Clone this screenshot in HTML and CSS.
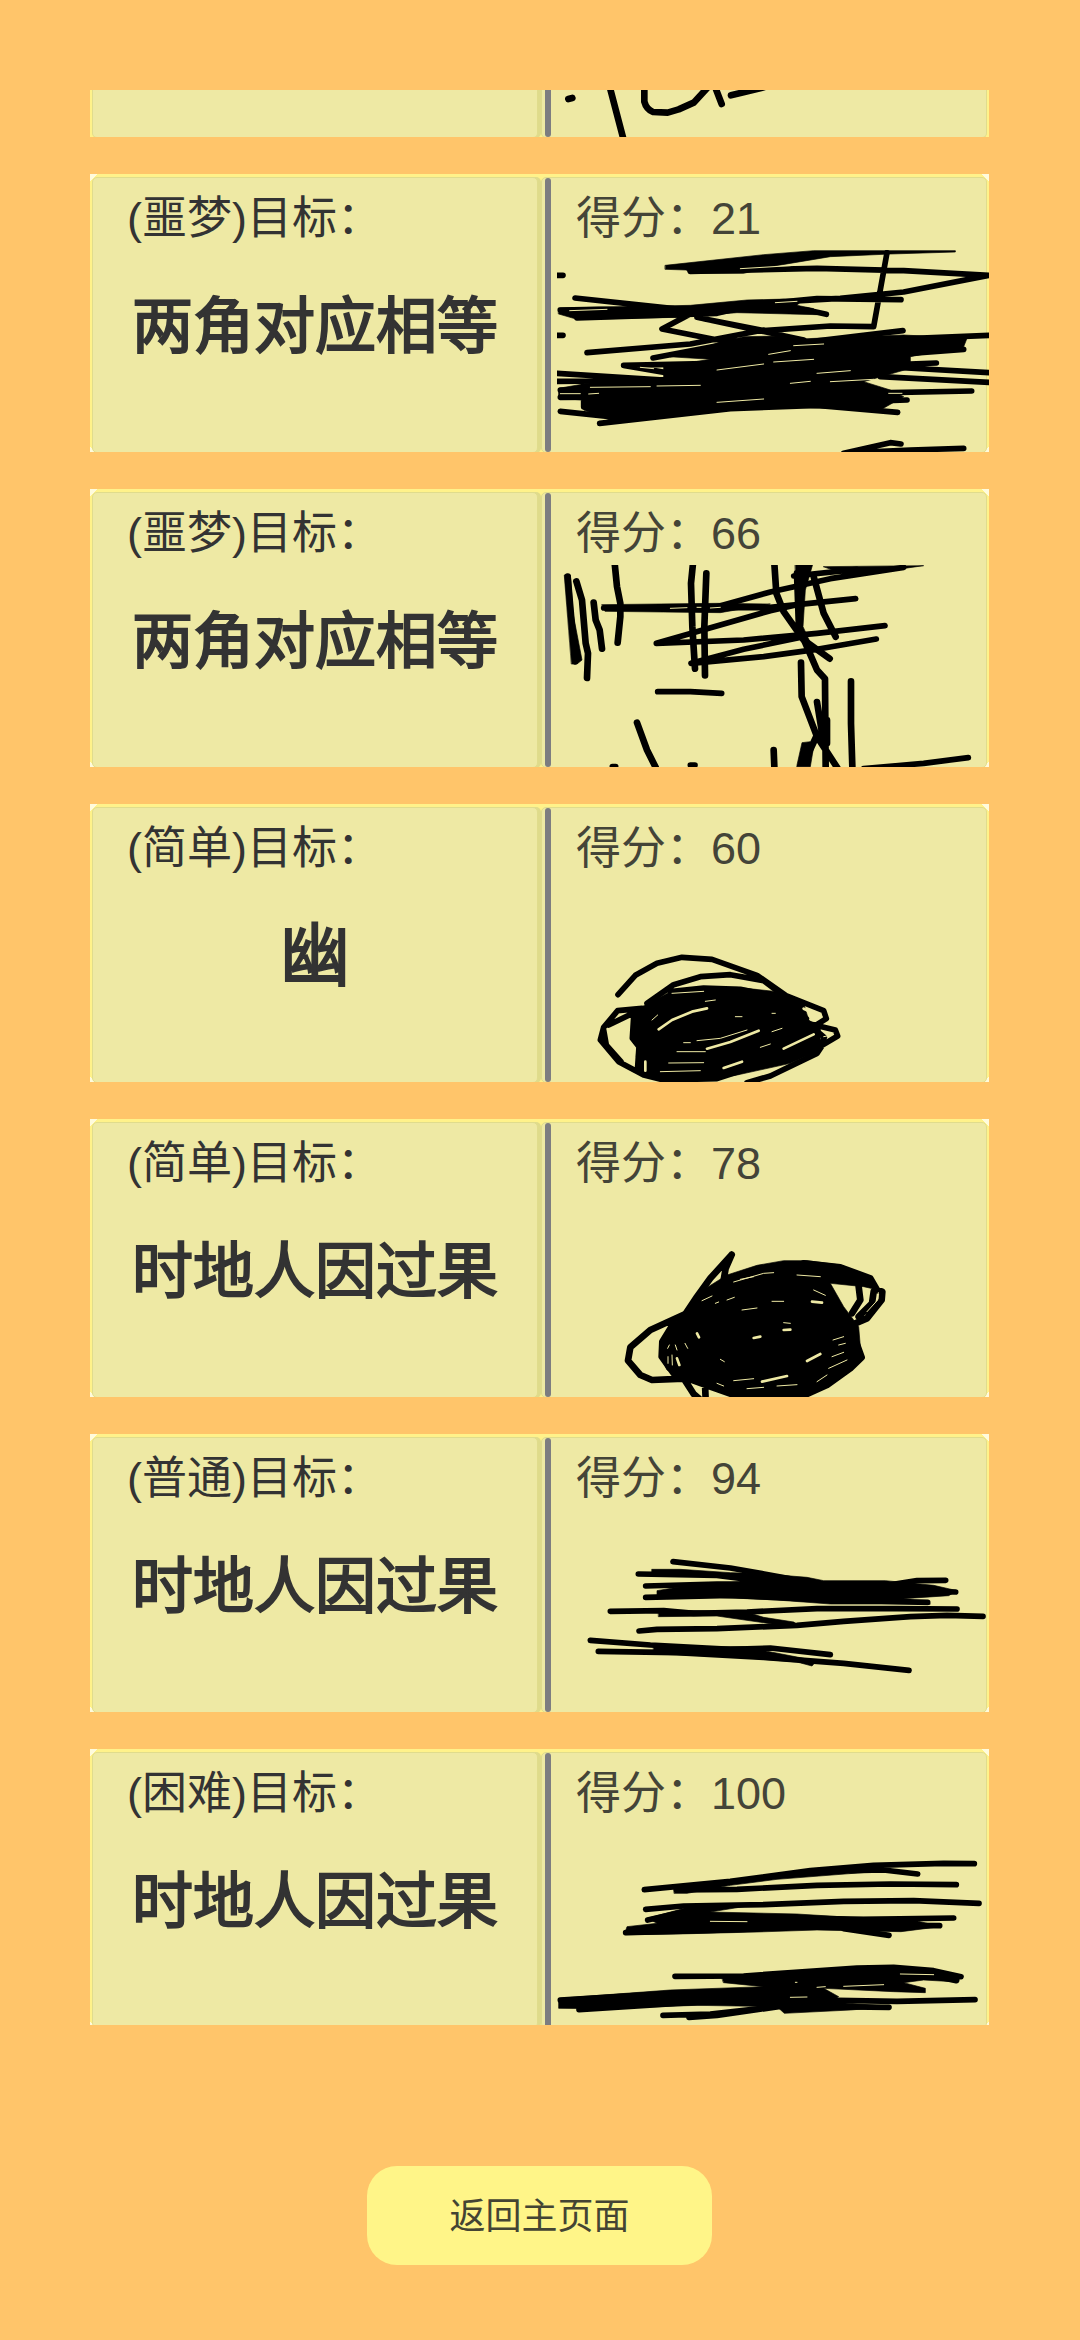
FILE: index.html
```html
<!DOCTYPE html>
<html lang="zh-CN">
<head>
<meta charset="utf-8">
<meta name="viewport" content="width=device-width, initial-scale=1">
<title>得分记录</title>
<link rel="stylesheet" href="styles.css">
</head>
<body>
<main class="page">
<ul class="records">
<li class="card card-cut">
<div class="pane pane-target"></div>
<div class="pane pane-score">
<svg class="drawing" viewBox="80 30 1296 141" preserveAspectRatio="xMinYMin slice" role="img" aria-label="手写">
<path class="wide" d="M114 57L126 54M238 20L280 180M342 20L342 65Q348 88 368 96L412 98L445 88L490 68L530 25M554 20L574 72M602 46L700 22"/>
</svg>
</div>
</li>
<li class="card">
<div class="pane pane-target"><p class="label">(噩梦)目标：</p><p class="target">两角对应相等</p></div>
<div class="pane pane-score"><p class="label score">得分：21</p>
<svg class="drawing" viewBox="80 510 1296 606" preserveAspectRatio="xMinYMin slice" role="img" aria-label="手写">
<path class="fill" d="M405 556L700 524L850 512L1275 512L1275 516L1080 522L900 530L720 560L640 580L478 580L468 570L405 568Z"/>
<path class="fill" d="M85 684L300 680L480 676L650 660L820 656L800 676L850 686L860 704L620 698L440 712L140 718L85 702Z"/>
<path class="fill" d="M420 830L560 790L640 770L760 768L830 776L1120 765L1310 775L1300 800L1140 830L1140 865L1000 905L1080 930L1120 950L1050 990L900 985L720 980L520 995L240 1020L160 990L155 960L85 955L85 925L200 905L400 895L400 860L540 838Z"/>
<path d="M80 586L98 586M80 766L98 766M480 574L860 565L1120 572L1376 586L1120 636L930 655L640 672L480 702L395 747L550 778L700 790M1070 518L1030 740L900 738L700 752L520 716M134 654L430 686M600 680L860 656L1112 659M500 712L820 780M830 690L888 703M170 818L480 792L700 750M368 834L640 782M830 786L1118 752M280 856L420 880M280 856L560 850M140 714L560 700L690 670M90 690L400 684M1376 766L1080 778M1300 808L900 838M1218 849L940 860M1376 878L1130 864L930 850M1376 907L1050 890M1324 933L960 940M1130 960L900 968M1102 997L860 976L600 986L208 1030M90 994L240 1010L620 960M80 880L400 900M80 904L500 900M90 930L420 930M90 952L420 950M160 910L160 980M940 1120L1080 1088L1112 1092M970 1118L1140 1110L1300 1105"/>
<path class="gap" d="M630 566L780 557M118 692L230 688M735 668L800 664M715 823L780 812M790 797L880 792M560 870L700 852M730 846L850 838M330 862L370 866M180 922L360 920M380 918L510 916M90 941L150 941M175 942L205 940M560 967L700 957M860 880L960 872M900 905L1030 898M1075 940L1115 940M780 910L840 904"/>
</svg>
</div>
</li>
<li class="card">
<div class="pane pane-target"><p class="label">(噩梦)目标：</p><p class="target">两角对应相等</p></div>
<div class="pane pane-score"><p class="label score">得分：66</p>
<svg class="drawing" viewBox="80 255 1296 606" preserveAspectRatio="xMinYMin slice" role="img" aria-label="手写">
<path class="fill" d="M103 285L120 285L128 400L155 540L140 552L124 552ZM795 250L848 250L825 330L818 440L850 510L800 450ZM215 374L560 370L720 372L570 398L400 396L225 394ZM800 855L815 788L840 785L850 800L840 860L800 860ZM880 260L1180 257L960 288Z"/>
<path class="wide" d="M112 290L134 544M138 304L155 360L166 490L173 520L170 594M190 368L196 420L208 450L215 506M253 250L260 320L270 370L270 410L262 488M488 250L482 310L486 440L494 566M528 280L522 440L524 586M732 250L738 340L760 395L820 480L898 536M850 290L880 400L916 470M800 280L806 445L860 570L884 596L886 860M812 548L814 650L860 770L922 865M860 666L880 790M890 720L890 790L860 765L830 830M962 604L962 730L966 860M730 810L732 860M320 728L350 810L376 862"/>
<path d="M560 380L720 336L900 296L1120 262M790 288L980 268M220 384L720 382L976 356M378 490L720 392L800 374M378 490L640 480L860 460L1064 437M482 550L640 508L820 470M482 550L700 530L860 508L1038 477M382 635L480 635L574 640M246 860L256 860M480 855L494 855M1000 866L1180 850L1314 833"/>
<path class="gap" d="M420 385L470 383M500 382L512 382M540 384L570 382"/>
</svg>
</div>
</li>
<li class="card">
<div class="pane pane-target"><p class="label">(简单)目标：</p><p class="target target-large">幽</p></div>
<div class="pane pane-score"><p class="label score">得分：60</p>
<svg class="drawing" viewBox="80 270 1296 606" preserveAspectRatio="xMinYMin slice" role="img" aria-label="手写">
<path class="fill" d="M335 650L420 605L500 594L620 592L740 605L820 640L835 690L870 715L870 780L780 820L620 855L540 868L380 870L335 850L318 800L320 760L305 740L308 670Z"/>
<path d="M263 614L315 556L380 520L455 502L545 508L680 556L765 615M350 640L430 584L510 560L600 554L700 572L750 610L880 662L888 686L850 710M335 655L262 662L220 712L210 750L265 815L340 855L400 870L560 866L700 820L860 775L922 738L915 720L830 700L760 640M235 705L320 664M310 680L306 745L326 770L322 830L360 858M650 878L720 858L860 790L880 760M420 605L520 594L630 598L740 620L828 686M850 715L882 742L860 790M220 720L228 765L272 815"/>
<path class="gap thick-gap" d="M385 718L425 690L485 665L530 655M530 776L600 756L685 722M760 776L850 733M820 656L872 680M580 834L635 815M345 815L345 842"/>
<path class="gap" d="M425 610L520 604M365 690L382 675M525 634L555 630M500 752L570 745L650 720M440 785L525 785M415 819L520 818M725 725L755 715M690 772L720 762M390 845L510 842M615 680L635 680M725 670L735 670M460 758L480 758M880 740L905 735"/>
</svg>
</div>
</li>
<li class="card">
<div class="pane pane-target"><p class="label">(简单)目标：</p><p class="target">时地人因过果</p></div>
<div class="pane pane-score"><p class="label score">得分：78</p>
<svg class="drawing" viewBox="80 255 1296 606" preserveAspectRatio="xMinYMin slice" role="img" aria-label="手写">
<path class="fill" d="M460 605L510 545L590 495L680 466L760 452L830 452L930 465L1020 500L1045 540L1000 530L900 520L940 590L985 650L990 710L1000 745L950 785L890 830L830 855L620 858L530 830L460 805L410 780L388 735L395 690L440 630Z"/>
<path class="wide" d="M604 434L540 505L500 560L465 612L360 660L300 712L293 752L330 795L365 810L460 806M604 434L586 475L580 510M820 460L930 472L1020 505L1040 540L1056 545L1054 570L1010 625L975 640M985 530L990 570L965 610M1030 545L1025 580L985 620M430 640L396 695L394 740L430 790L540 830L620 858L830 852L890 825L960 775L994 742L975 690M460 805L490 852L505 865M524 820L526 870M830 852L860 800L990 735"/>
<path class="gap thick-gap" d="M925 533L970 538L958 575M830 753L870 732M670 684L690 680M760 660L780 659M440 745L447 765M695 815L770 798M845 575L875 578M500 670L506 682"/>
<path class="gap" d="M610 516L700 490L730 488M800 495L870 500M630 508L670 500M515 572L545 558M555 580L565 576M590 570L612 562M635 600L680 594M725 574L760 574M850 540L885 556M413 740L413 760M425 735L426 765M417 705L412 715M435 705L440 720M464 700L472 715M570 748L582 755M908 690L940 680M925 705L945 700M905 740L940 727M895 775L950 750M610 812L670 806M860 815L890 795M650 836L700 832M740 828L800 824M760 638L780 640M1044 548L1042 570L1010 605M560 820L580 828M1008 545L1004 580"/>
</svg>
</div>
</li>
<li class="card">
<div class="pane pane-target"><p class="label">(普通)目标：</p><p class="target">时地人因过果</p></div>
<div class="pane pane-score"><p class="label score">得分：94</p>
<svg class="drawing" viewBox="80 240 1296 606" preserveAspectRatio="xMinYMin slice" role="img" aria-label="手写">
<path class="fill" d="M365 418L450 418L600 428L680 430L830 442L880 452L1065 452L1210 466L1280 482L1255 497L1120 506L1200 522L900 522L740 510L560 502L380 506L380 482L440 472L620 456L700 456L600 440L365 434ZM385 540L640 544L700 562L790 576L810 590L740 584L560 558L385 560ZM370 650L640 650L820 685L852 700L845 708L800 696L600 680L370 672Z"/>
<path d="M428 395L600 414L780 446M324 432L560 436L760 462M346 468L560 462L900 462M346 502L600 496L860 508L1192 517M1070 466L1160 452L1246 451M900 484L1276 486M240 544L400 542L490 550L650 546L860 536L1100 536L1280 537M326 603L380 598L560 596L800 586L940 574L1140 560L1250 556L1358 559M180 631L360 645L600 658L720 654L900 674M204 664L440 668L700 682L940 700L1136 721"/>
</svg>
</div>
</li>
<li class="card">
<div class="pane pane-target"><p class="label">(困难)目标：</p><p class="target">时地人因过果</p></div>
<div class="pane pane-score"><p class="label score">得分：100</p>
<svg class="drawing" viewBox="80 255 1296 606" preserveAspectRatio="xMinYMin slice" role="img" aria-label="手写">
<path class="fill" d="M432 440L560 428L700 410L1020 372L1050 380L1020 396L740 418L600 436L470 460L432 460ZM350 535L500 495L700 490L540 516L800 522L960 532L1120 532L1170 545L1230 560L1112 575L950 572L860 570L680 576L440 582L282 584L290 560L380 550ZM575 712L860 690L1100 680L1290 705L1285 726L1180 720L1120 728L1185 745L1185 758L1090 755L880 745L925 770L900 785L1080 800L960 810L762 820L740 800L500 796L200 806L85 805L85 775L420 750L700 740L580 728Z"/>
<path d="M342 449L600 424L840 392L1030 376L1240 370L1332 371M960 392L1060 390L1162 402M438 450L620 448L860 436L1080 432L1278 434M346 508L460 498L700 494L940 484L1150 482L1346 490M352 540L500 506M800 534L1000 538L1270 534M286 578L600 570L900 556M940 566L1076 586M1000 556L1228 557M434 709L640 708L980 684L1090 682L1210 692L1292 710M1120 710L1210 708L1278 722M90 780L420 760M146 809L440 790L740 778L1100 784L1334 779M398 826L540 822L760 798L900 800M476 832L560 826L760 798M900 800L1076 802"/>
<path class="gap" d="M540 544L650 545M860 742L885 740M940 739L1060 734M780 772L830 771M1110 702L1210 704M795 727L800 727"/>
</svg>
</div>
</li>
</ul>
<footer class="actions"><button class="back" type="button">返回主页面</button></footer>
</main>
</body>
</html>
```
FILE: styles.css
```css
* { box-sizing: border-box; }

body {
  margin: 0;
  background: #ffc56a;
  color: #333;
  font-family: "Liberation Sans", "Noto Sans CJK SC", sans-serif;
}

.page {
  display: flex;
  flex-direction: column;
  height: 100vh;
  padding: 90px 91px 0 90px;
}

.records {
  display: flex;
  flex: 1;
  flex-direction: column;
  gap: 37px;
  min-height: 0;
  margin: 0;
  padding: 0;
  overflow: hidden;
  list-style: none;
}

/* yellow frame with pale corners */
.card {
  display: grid;
  flex: none;
  grid-template-columns: 1fr 1fr;
  gap: 3px;
  height: 278px;
  padding: 3px 2px 2px;
  overflow: hidden;
  background:
    linear-gradient(135deg, #fffbdc 5px, transparent 5px),
    linear-gradient(225deg, #fffbdc 5px, transparent 5px),
    linear-gradient(45deg, #fffbdc 4px, transparent 4px),
    linear-gradient(315deg, #fffbdc 4px, transparent 4px),
    #fff28a;
}

.card-cut {
  height: 47px;
  padding-top: 0;
  background: #fff28a;
}

.pane {
  min-width: 0;
  border: 1px solid #e0dc8c;
  border-radius: 5px;
  background: #eee9a4;
}

.pane-target { box-shadow: 3px 0 0 #dfdb8b; }

.card-cut .pane {
  border-top: 0;
  border-radius: 0 0 5px 5px;
}

.pane-score {
  position: relative;
  padding-left: 15px;
}

/* pencil-grey divider along the left side of the score pane */
.pane-score::before {
  position: absolute;
  top: 0;
  bottom: 0;
  left: 3px;
  width: 6px;
  border-radius: 3px;
  background: #7d7d80;
  content: "";
}

.card-cut .pane-score::before { border-radius: 0 0 3px 3px; }

.label {
  height: 72px;
  margin: 0;
  padding: 8px 0 0 34px;
  font-size: 45px;
  line-height: 66px;
  white-space: nowrap;
}

.score {
  padding-left: 19px;
  color: #444438;
}

.target {
  margin: 0;
  font-size: 61px;
  line-height: 154px;
  text-align: center;
  white-space: nowrap;
  -webkit-text-stroke: 2px #333;
}

.target-large { font-size: 70px; }

.drawing {
  position: relative;
  display: block;
  width: calc(100% + 3px);
  height: 202px;
}

.card-cut .drawing { height: 47px; }

.drawing path {
  fill: none;
  stroke: #000;
  stroke-linecap: round;
  stroke-linejoin: round;
  stroke-width: 17;
}

.drawing .wide { stroke-width: 20; }

.drawing .fill {
  fill: #000;
  stroke-width: 2;
}

.drawing .gap {
  stroke: #eee9a4;
  stroke-width: 3;
}

.drawing .thick-gap { stroke-width: 8; }

.actions {
  display: flex;
  flex: none;
  align-items: flex-start;
  justify-content: center;
  height: 315px;
  padding-top: 141px;
}

.back {
  width: 345px;
  height: 99px;
  padding: 0 0 6px;
  border: 0;
  border-radius: 30px;
  background: #fff588;
  color: #444433;
  font: inherit;
  font-size: 36px;
}
```
